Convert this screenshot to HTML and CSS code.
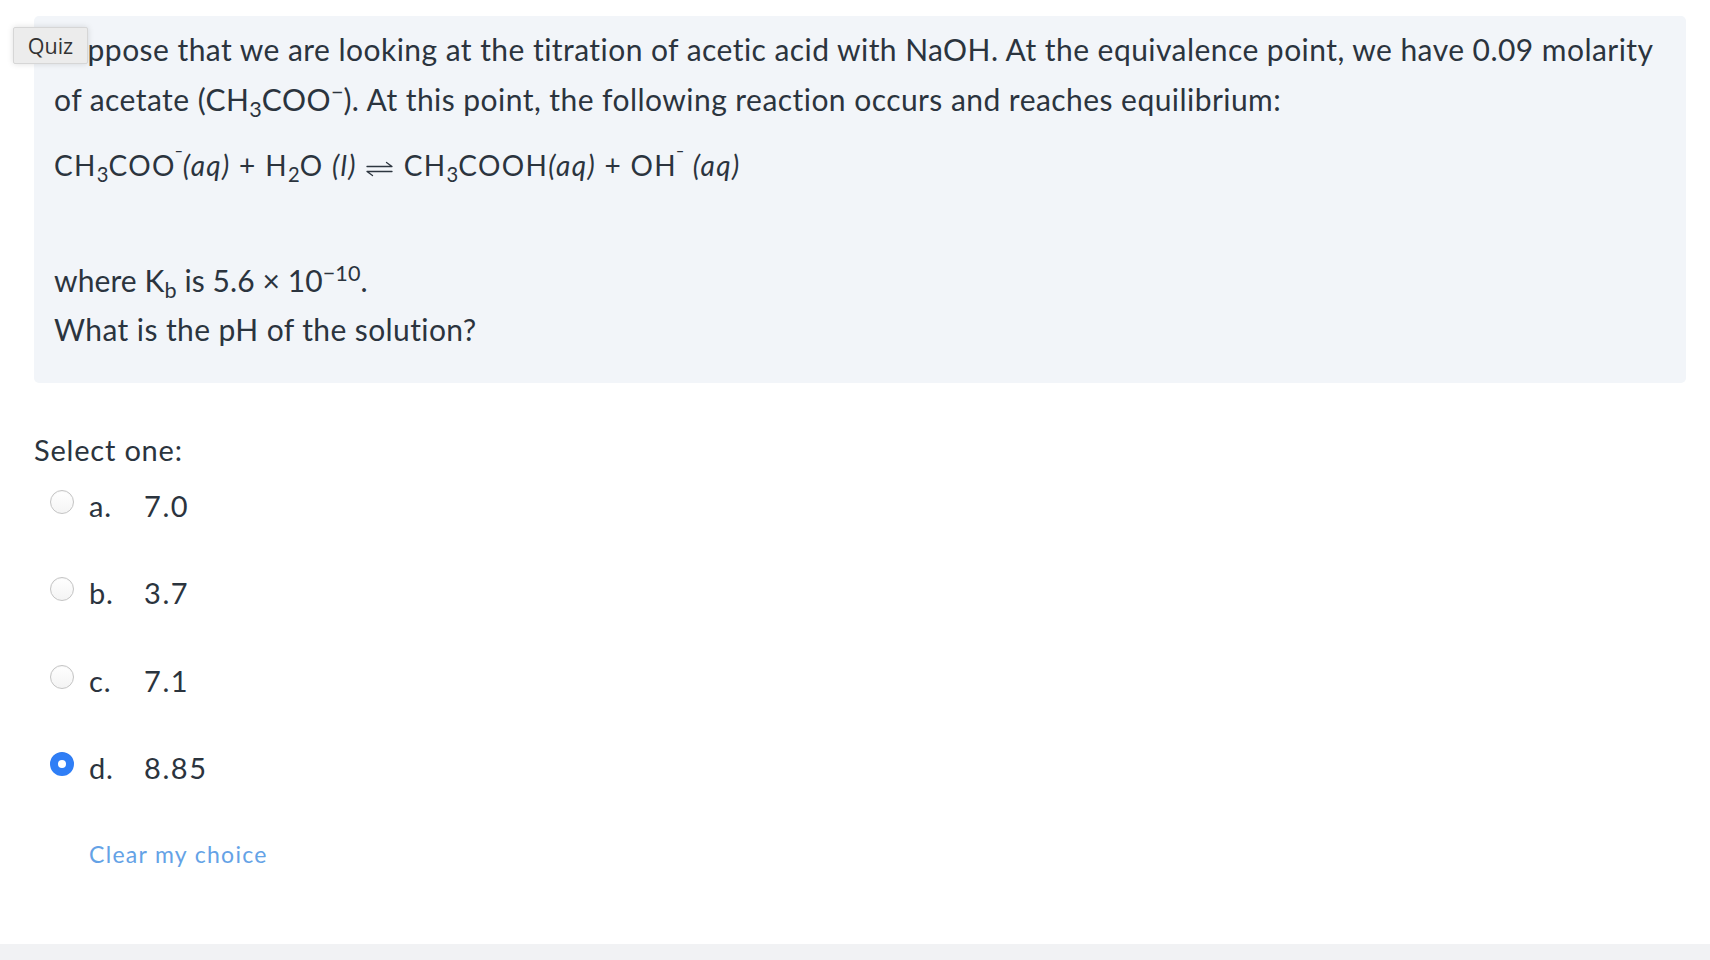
FILE: index.html
```html
<!DOCTYPE html>
<html lang="en">
<head>
<meta charset="utf-8">
<title>Quiz question</title>
<link rel="stylesheet" href="styles.css">
</head>
<body>
<main class="page">
  <section class="question">
    <div class="qtext">
      <span class="badge">Quiz</span>
      <p class="para">Suppose that we are looking at the titration of acetic acid with NaOH. At the equivalence point, we have 0.09 molarity of acetate (CH<sub>3</sub>COO<sup>−</sup>). At this point, the following reaction occurs and reaches equilibrium:</p>
      <p class="equation">CH<sub>3</sub>COO<sup class="dash">ˉ</sup><i>(aq)</i> + H<sub>2</sub>O <i>(l)</i> <svg class="eq-arrow" width="28" height="16" viewBox="0 0 28 16" aria-hidden="true"><path d="M1 5.5 H26 L20.5 1.5" fill="none" stroke="#2d3640" stroke-width="1.3" stroke-linecap="round" stroke-linejoin="round"/><path d="M26 10.5 H1 L6.5 14.5" fill="none" stroke="#2d3640" stroke-width="1.3" stroke-linecap="round" stroke-linejoin="round"/></svg> CH<sub>3</sub>COOH<i>(aq)</i> + OH<sup class="dash">ˉ</sup> <i>(aq)</i></p>
      <p class="kb">where K<sub>b</sub> is 5.6 × 10<sup>−10</sup>.</p>
      <p class="ask">What is the pH of the solution?</p>
    </div>
    <div class="answers">
      <p class="prompt">Select one:</p>
      <div class="option"><span class="radio"></span><span class="num">a.</span><span class="val">7.0</span></div>
      <div class="option"><span class="radio"></span><span class="num">b.</span><span class="val">3.7</span></div>
      <div class="option"><span class="radio"></span><span class="num">c.</span><span class="val">7.1</span></div>
      <div class="option"><span class="radio checked"></span><span class="num">d.</span><span class="val">8.85</span></div>
      <a class="clear" href="#">Clear my choice</a>
    </div>
  </section>
  <footer class="band"></footer>
</main>
</body>
</html>
```

FILE: styles.css
```css
html, body {
  margin: 0;
  padding: 0;
  background: #ffffff;
}

body {
  font-family: Lato, "Liberation Sans", sans-serif;
  color: #2b343e;
}

.page {
  height: 960px;
  display: flex;
  flex-direction: column;
  overflow: hidden;
}

.question {
  flex: 1;
  padding: 16px 24px 0 34px;
}

.qtext {
  position: relative;
  background: #f2f5f9;
  border-radius: 5px;
  padding: 8px 20px 31px 20px;
}

.badge {
  position: absolute;
  left: -21px;
  top: 11px;
  box-sizing: border-box;
  width: 75px;
  height: 37px;
  line-height: 35px;
  text-align: center;
  font-family: "Open Sans", "Noto Sans", sans-serif;
  font-size: 21.5px;
  color: #333333;
  background: #ececec;
  border: 1px solid #d6d6d6;
  border-radius: 2px;
  box-shadow: 0 0 6px rgba(0, 0, 0, 0.13);
}

.qtext p {
  margin: 0;
}

.para {
  font-size: 30px;
  line-height: 50px;
  letter-spacing: 0.45px;
}

.equation {
  margin-top: 16px !important;
  font-size: 28px;
  line-height: 51px;
  letter-spacing: 1.35px;
}

.kb {
  margin-top: 64px !important;
  font-size: 30px;
  line-height: 51px;
  letter-spacing: 0.1px;
}

.ask {
  font-size: 30px;
  line-height: 46px;
  letter-spacing: 0.4px;
}

sub, sup {
  position: relative;
  font-size: 72%;
  line-height: 0;
  vertical-align: baseline;
  letter-spacing: 0;
}

sub {
  bottom: -0.3em;
}

sup {
  top: -0.5em;
}

sup.dash {
  top: -0.55em;
  margin-left: -1px;
}

i {
  font-style: italic;
}

.eq-arrow {
  vertical-align: -1px;
  margin: 0 1px;
}

.answers {
  padding-top: 47px;
}

.prompt {
  margin: 0 0 16px;
  font-size: 29px;
  line-height: 40px;
  letter-spacing: 0.8px;
}

.option {
  display: flex;
  align-items: flex-start;
  height: 87.33px;
  padding-left: 16px;
  font-size: 29px;
  line-height: 40px;
  letter-spacing: 0.8px;
}

.val {
  letter-spacing: 1.6px;
}

.radio {
  box-sizing: border-box;
  flex: none;
  width: 24px;
  height: 24px;
  margin-top: 4px;
  margin-right: 15px;
  border-radius: 50%;
  border: 1px solid #c4c4c4;
  background: linear-gradient(#ffffff, #f4f4f4);
  box-shadow: inset 0 1px 1px rgba(0, 0, 0, 0.04);
}

.radio.checked {
  border: none;
  background: #2f7ef6;
  display: flex;
  align-items: center;
  justify-content: center;
}

.radio.checked::after {
  content: "";
  width: 8px;
  height: 8px;
  border-radius: 50%;
  background: #ffffff;
}

.num {
  width: 55px;
}

.clear {
  display: block;
  margin: 3px 0 0 55px;
  font-size: 23px;
  line-height: 32px;
  letter-spacing: 1.3px;
  color: #64a2e6;
  text-decoration: none;
}

.band {
  flex: none;
  height: 16px;
  background: #f1f2f4;
}
```
